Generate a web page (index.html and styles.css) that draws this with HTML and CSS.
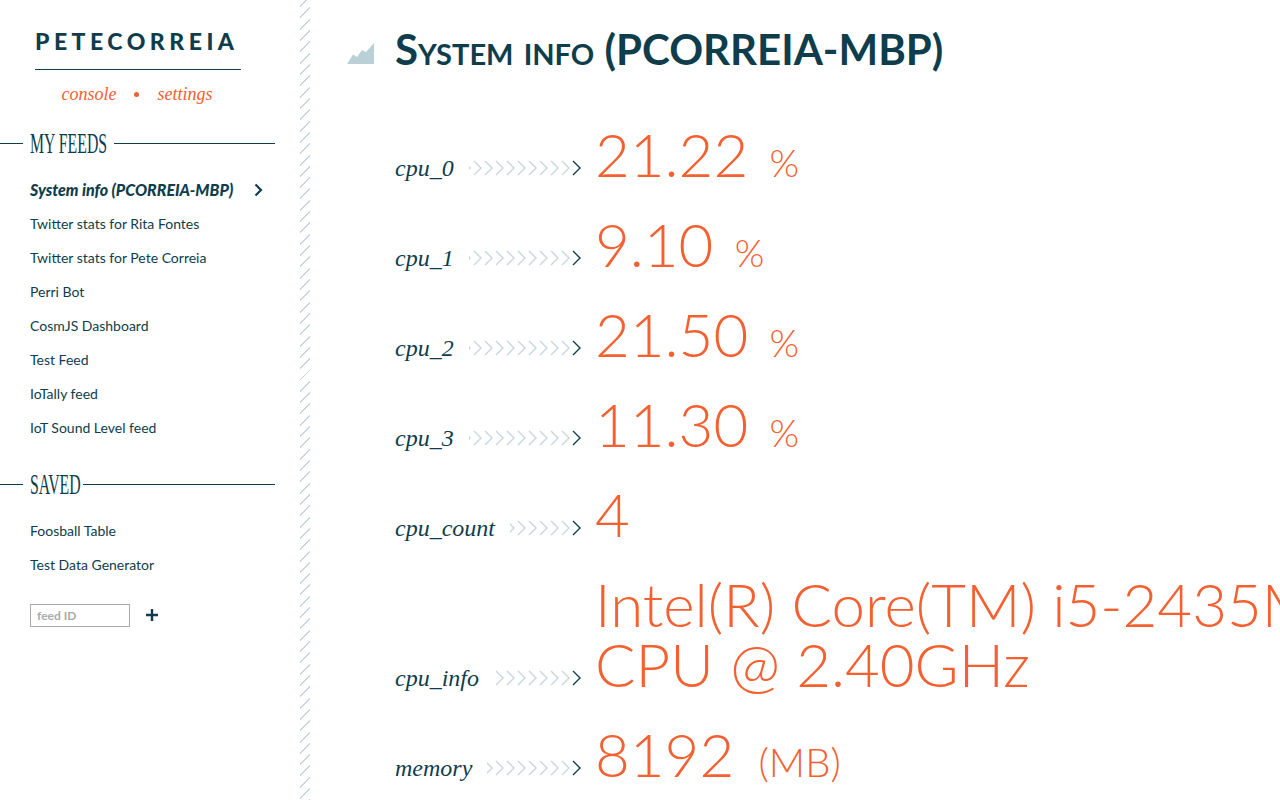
FILE: index.html
```html
<!DOCTYPE html>
<html lang="en">
<head>
    <meta charset="UTF-8">
    <meta name="viewport" content="width=device-width, initial-scale=1.0">
    <title>System info (PCORREIA-MBP)</title>
    <link rel="stylesheet" href="styles.css">
</head>
<body>
    <aside class="sidebar">
        <div class="logo">PETECORREIA</div>
        <div class="top-nav">
            <a>console</a>
            <span class="dot"></span>
            <a>settings</a>
        </div>

        <h2 class="section-title"><span>MY FEEDS</span></h2>
        <ul class="feeds">
            <li class="active">System info (PCORREIA-MBP)
                <svg class="active-arrow" width="9" height="14" viewBox="0 0 9 14"><path d="M1.5 1.5 L7 7 L1.5 12.5" fill="none" stroke="#0f3d4c" stroke-width="2.2"/></svg>
            </li>
            <li>Twitter stats for Rita Fontes</li>
            <li>Twitter stats for Pete Correia</li>
            <li>Perri Bot</li>
            <li>CosmJS Dashboard</li>
            <li>Test Feed</li>
            <li>IoTally feed</li>
            <li>IoT Sound Level feed</li>
        </ul>

        <h2 class="section-title saved"><span>SAVED</span></h2>
        <ul class="feeds">
            <li>Foosball Table</li>
            <li>Test Data Generator</li>
        </ul>

        <div class="add-feed">
            <input type="text" placeholder="feed ID">
            <svg class="add-icon" width="14" height="14" viewBox="0 0 14 14"><path d="M7 1 V13 M1 7 H13" stroke="#0f3d4c" stroke-width="2.4"/></svg>
        </div>
    </aside>
    <div class="stripes"></div>

    <main class="content">
        <header class="page-title">
            <svg class="title-icon" width="27" height="21" viewBox="0 0 27 21"><path d="M0 21 L6 11.5 L10 14 L15 7 L19 9 L27 0 V21 Z" fill="#b9d0d7"/></svg>
            <h1>System info (PCORREIA-MBP)</h1>
        </header>

        <div class="row">
            <div class="key"><span class="key-name">cpu_0</span><span class="arrows"></span></div>
            <div class="value">21.22 <span class="unit">%</span></div>
        </div>
        <div class="row">
            <div class="key"><span class="key-name">cpu_1</span><span class="arrows"></span></div>
            <div class="value">9.10 <span class="unit">%</span></div>
        </div>
        <div class="row">
            <div class="key"><span class="key-name">cpu_2</span><span class="arrows"></span></div>
            <div class="value">21.50 <span class="unit">%</span></div>
        </div>
        <div class="row">
            <div class="key"><span class="key-name">cpu_3</span><span class="arrows"></span></div>
            <div class="value">11.30 <span class="unit">%</span></div>
        </div>
        <div class="row">
            <div class="key"><span class="key-name">cpu_count</span><span class="arrows"></span></div>
            <div class="value">4</div>
        </div>
        <div class="row">
            <div class="key"><span class="key-name">cpu_info</span><span class="arrows"></span></div>
            <div class="value">Intel(R) Core(TM) i5-2435M<br>CPU @ 2.40GHz</div>
        </div>
        <div class="row">
            <div class="key"><span class="key-name">memory</span><span class="arrows"></span></div>
            <div class="value">8192 <span class="unit large">(MB)</span></div>
        </div>
    </main>
</body>
</html>
```

FILE: styles.css
```css
html, body {
    height: 100%;
}

body {
    margin: 0;
    display: flex;
    height: 800px;
    overflow: hidden;
    background: #fff;
    color: #0f3d4c;
    font-family: 'Lato', sans-serif;
}

/* sidebar */

.sidebar {
    width: 300px;
    flex-shrink: 0;
    padding-top: 29px;
    box-sizing: border-box;
}

.logo {
    width: 206px;
    margin-left: 35px;
    padding-bottom: 15px;
    border-bottom: 1px solid #0f3d4c;
    font-size: 23px;
    line-height: 25px;
    font-weight: 900;
    letter-spacing: 4.5px;
    white-space: nowrap;
}

.top-nav {
    display: flex;
    align-items: center;
    width: 206px;
    margin: 12px 0 0 34px;
    justify-content: center;
    gap: 18px;
    color: #f4602f;
    font-family: 'Liberation Serif', serif;
    font-style: italic;
    font-size: 18px;
    line-height: 24px;
}

.dot {
    width: 5px;
    height: 5px;
    border-radius: 50%;
    background: #f4602f;
}

.section-title {
    display: flex;
    align-items: center;
    width: 275px;
    height: 30px;
    margin: 22px 0 0;
    font-size: 29px;
    font-weight: normal;
    font-family: 'Liberation Serif', serif;
}

.section-title::before {
    content: "";
    width: 23px;
    border-top: 1px solid #0f3d4c;
}

.section-title::after {
    content: "";
    flex: 1;
    border-top: 1px solid #0f3d4c;
}

.section-title span {
    width: 77px;
    margin: 0 7px;
    white-space: nowrap;
    transform: scaleX(0.545);
    transform-origin: left center;
}

.section-title.saved {
    margin-top: 24px;
}

.section-title.saved span {
    width: 46px;
}

.feeds {
    list-style: none;
    margin: 15px 0 0;
    padding: 0 0 0 30px;
    font-size: 14px;
    line-height: 34px;
}

.feeds .active {
    display: flex;
    align-items: center;
    font-size: 16px;
    font-weight: 900;
    font-style: italic;
}

.active-arrow {
    margin-left: 21px;
}

.add-feed {
    display: flex;
    align-items: center;
    margin: 22px 0 0 30px;
    gap: 15px;
}

.add-feed input {
    width: 100px;
    height: 23px;
    box-sizing: border-box;
    padding: 0 6px;
    border: 1px solid #aaa;
    outline: none;
    font-family: 'Lato', sans-serif;
    font-size: 12px;
    font-weight: 700;
}

.add-feed input::placeholder {
    color: #aaa;
}

.add-icon {
    margin-bottom: 2px;
}

.stripes {
    width: 10px;
    flex-shrink: 0;
    background: repeating-linear-gradient(135deg, #fff 0 4px, #c5d6dc 4px 5.4px, #fff 5.4px 8px);
}

/* main */

.content {
    flex: 1;
    min-width: 0;
    padding-left: 37px;
}

.page-title {
    display: flex;
    align-items: flex-end;
    height: 84px;
    margin-bottom: 18px;
    gap: 21px;
}

.title-icon {
    margin-bottom: 20px;
}

h1 {
    margin: 0;
    font-size: 42px;
    line-height: 70px;
    font-weight: 700;
    font-variant: small-caps;
    white-space: nowrap;
}

.row {
    display: flex;
    align-items: flex-end;
    margin-left: 48px;
    padding-top: 22px;
}

.key {
    display: flex;
    align-items: center;
    flex-shrink: 0;
    width: 187px;
    height: 24px;
    margin-bottom: 12px;
    margin-right: 13px;
    font-family: 'Liberation Serif', serif;
    font-style: italic;
    font-size: 24px;
}

.key-name {
    margin-right: 15px;
}

.arrows {
    position: relative;
    flex: 1;
    height: 16px;
    background: url("data:image/svg+xml,%3Csvg xmlns='http://www.w3.org/2000/svg' width='11' height='16'%3E%3Cpath d='M2 1 L9 8 L2 15' fill='none' stroke='%23c5d6dc' stroke-width='1.4'/%3E%3C/svg%3E") repeat-x right center;
}

.arrows::after {
    content: "";
    position: absolute;
    right: 0;
    top: 0;
    width: 11px;
    height: 16px;
    background: #fff url("data:image/svg+xml,%3Csvg xmlns='http://www.w3.org/2000/svg' width='11' height='16'%3E%3Cpath d='M2 1 L9 8 L2 15' fill='none' stroke='%230f3d4c' stroke-width='1.4'/%3E%3C/svg%3E") no-repeat right center;
}

.value {
    margin-bottom: 8px;
    color: #f4602f;
    font-size: 60px;
    font-weight: 300;
    line-height: 60px;
    white-space: nowrap;
}

.unit {
    margin-left: 5px;
    font-size: 38px;
    line-height: 1;
}

.unit.large {
    margin-left: 8px;
    font-size: 40px;
}
```
